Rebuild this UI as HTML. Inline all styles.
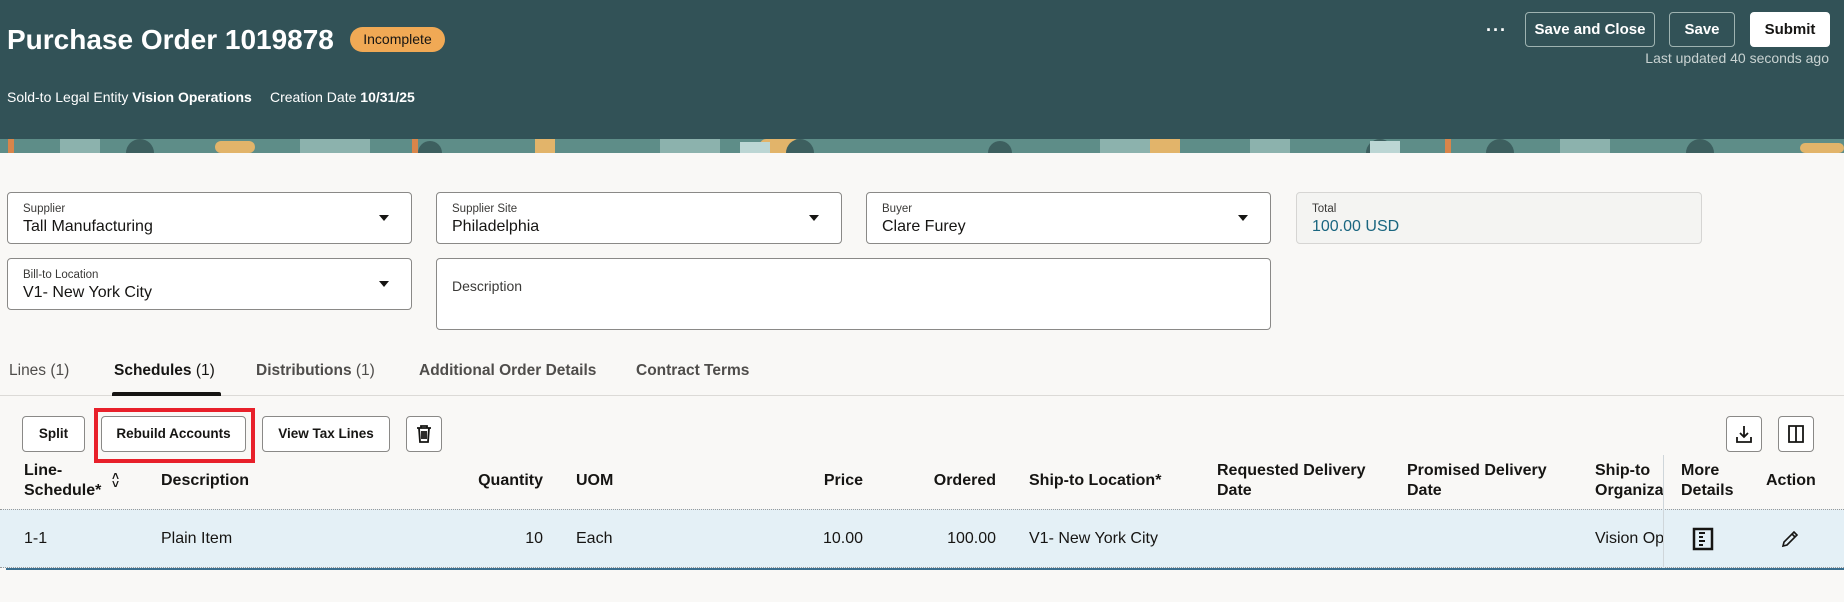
<!DOCTYPE html>
<html><head><meta charset="utf-8"><style>
*{box-sizing:border-box;margin:0;padding:0}
body{width:1844px;height:602px;overflow:hidden;background:#f9f8f6;font-family:"Liberation Sans",sans-serif;color:#161513;position:relative}
.abs{position:absolute}
.hdr{left:0;top:0;width:1844px;height:140px;background:#325257}
.band{left:0;top:139px;width:1844px;height:14px;background:#5e8d88;overflow:hidden}
.title{left:7px;top:24px;font-size:28px;font-weight:bold;color:#fff}
.pill{left:350px;top:27px;width:95px;height:25px;border-radius:13px;background:#f0a955;color:#161513;font-size:14px;text-align:center;line-height:25px}
.sub{top:89px;font-size:14px;color:#fff}
.hbtn{top:12px;height:35px;border:1px solid #9fb3b1;border-radius:4px;color:#fff;font-size:15px;font-weight:bold;text-align:center;line-height:33px}
.fld{border:1px solid #8a8987;border-radius:4px;background:#fff}
.lbl{font-size:11.5px;color:#3a3937;position:absolute;left:15px;top:10px}
.val{font-size:16px;position:absolute;left:15px;top:25px}
.caret{position:absolute;right:22px;top:22px;width:0;height:0;border-left:5px solid transparent;border-right:5px solid transparent;border-top:6px solid #161513}
.tab{top:362px;font-size:15.5px;color:#4f4d4b;font-weight:bold}
.tab span{font-weight:normal}
.tb{top:416px;height:36px;border:1px solid #8a8987;border-radius:4px;background:#fff;font-size:13.5px;font-weight:bold;text-align:center;line-height:34px}
.th{font-size:16px;font-weight:bold;line-height:20px}
.td{font-size:16px;top:530px}
</style></head><body>
<div class="abs hdr"></div>
<div class="abs band">
<svg width="1844" height="14">
<g fill="#8cb2ad"><rect x="60" y="0" width="40" height="14"/><rect x="300" y="0" width="70" height="14"/><rect x="660" y="0" width="60" height="14"/><rect x="1100" y="0" width="60" height="14"/><rect x="1560" y="0" width="50" height="14"/><rect x="1250" y="0" width="40" height="14"/></g>
<g fill="#e2b46a"><rect x="215" y="2" width="40" height="12" rx="6"/><rect x="535" y="0" width="20" height="14"/><rect x="760" y="0" width="40" height="14" rx="6"/><rect x="1150" y="0" width="30" height="14"/><rect x="1800" y="4" width="44" height="10" rx="5"/></g>
<g fill="#d9854a"><rect x="8" y="0" width="6" height="14"/><rect x="412" y="0" width="6" height="14"/><rect x="1445" y="0" width="6" height="14"/></g>
<g fill="#3d5f5f"><circle cx="140" cy="14" r="14"/><circle cx="430" cy="14" r="12"/><circle cx="800" cy="14" r="14"/><circle cx="1000" cy="14" r="12"/><circle cx="1380" cy="14" r="14"/><circle cx="1700" cy="14" r="14"/><circle cx="1500" cy="14" r="14"/></g>
<g fill="#bcd6d4"><rect x="740" y="3" width="30" height="11"/><rect x="1370" y="2" width="30" height="12"/></g>
</svg></div>
<div class="abs title">Purchase Order 1019878</div>
<div class="abs pill">Incomplete</div>
<div class="abs sub" style="left:7px">Sold-to Legal Entity <b>Vision Operations</b></div>
<div class="abs sub" style="left:270px">Creation Date <b>10/31/25</b></div>
<div class="abs" style="left:1486px;top:20px;color:#fff;font-size:18px;font-weight:bold;letter-spacing:1px">···</div>
<div class="abs hbtn" style="left:1525px;width:130px">Save and Close</div>
<div class="abs hbtn" style="left:1669px;width:66px">Save</div>
<div class="abs hbtn" style="left:1750px;width:80px;background:#fff;color:#161513;border-color:#fff">Submit</div>
<div class="abs" style="right:15px;top:50px;font-size:14px;color:#c9d3d2">Last updated 40 seconds ago</div>

<div class="abs fld" style="left:7px;top:192px;width:405px;height:52px"><div class="lbl">Supplier</div><div class="val">Tall Manufacturing</div><div class="caret"></div></div>
<div class="abs fld" style="left:436px;top:192px;width:406px;height:52px"><div class="lbl">Supplier Site</div><div class="val">Philadelphia</div><div class="caret"></div></div>
<div class="abs fld" style="left:866px;top:192px;width:405px;height:52px"><div class="lbl">Buyer</div><div class="val">Clare Furey</div><div class="caret"></div></div>
<div class="abs fld" style="left:1296px;top:192px;width:406px;height:52px;background:#f4f4f2;border-color:#d6d5d3"><div class="lbl">Total</div><div class="val" style="color:#1a6680">100.00 USD</div></div>
<div class="abs fld" style="left:7px;top:258px;width:405px;height:52px"><div class="lbl">Bill-to Location</div><div class="val">V1- New York City</div><div class="caret"></div></div>
<div class="abs fld" style="left:436px;top:258px;width:835px;height:72px"><div class="lbl" style="font-size:14px;top:19px">Description</div></div>

<div class="abs tab" style="left:9px;font-weight:normal">Lines <span>(1)</span></div>
<div class="abs tab" style="left:114px;color:#161513">Schedules <span>(1)</span></div>
<div class="abs tab" style="left:256px">Distributions <span>(1)</span></div>
<div class="abs tab" style="left:419px">Additional Order Details</div>
<div class="abs tab" style="left:636px">Contract Terms</div>
<div class="abs" style="left:0;top:395px;width:1844px;height:1px;background:#dcdad7"></div>
<div class="abs" style="left:112px;top:392px;width:109px;height:4px;background:#161513;border-radius:2px 2px 0 0"></div>

<div class="abs tb" style="left:22px;width:63px">Split</div>
<div class="abs" style="left:94px;top:408px;width:161px;height:55px;border:4px solid #e8202a"></div>
<div class="abs tb" style="left:101px;width:145px">Rebuild Accounts</div>
<div class="abs tb" style="left:262px;width:128px">View Tax Lines</div>
<div class="abs tb" style="left:406px;width:36px"><svg width="18" height="20" viewBox="0 0 18 20" style="margin-top:7px"><path d="M2 4h14M6 4V2h6v2M4 4l1 14h8l1-14M7 7v8M9 7v8M11 7v8" stroke="#161513" stroke-width="1.8" fill="none"/></svg></div>
<div class="abs tb" style="left:1726px;width:36px"><svg width="18" height="20" viewBox="0 0 18 20" style="margin-top:7px"><path d="M9 2v11M5 9l4 4 4-4M2 13v5h14v-5" stroke="#161513" stroke-width="1.8" fill="none"/></svg></div>
<div class="abs tb" style="left:1778px;width:36px"><svg width="18" height="20" viewBox="0 0 18 20" style="margin-top:7px"><path d="M2 2h14v16H2zM9 2v16" stroke="#161513" stroke-width="1.8" fill="none"/></svg></div>

<div class="abs th" style="left:24px;top:461px">Line-<br>Schedule*</div>
<div class="abs" style="left:112px;top:472px;font-size:12px;line-height:8px;font-weight:bold">˄<br>˅</div>
<div class="abs th" style="left:161px;top:471px">Description</div>
<div class="abs th" style="left:443px;width:100px;text-align:right;top:471px">Quantity</div>
<div class="abs th" style="left:576px;top:471px">UOM</div>
<div class="abs th" style="left:763px;width:100px;text-align:right;top:471px">Price</div>
<div class="abs th" style="left:896px;width:100px;text-align:right;top:471px">Ordered</div>
<div class="abs th" style="left:1029px;top:471px">Ship-to Location*</div>
<div class="abs th" style="left:1217px;top:461px">Requested Delivery<br>Date</div>
<div class="abs th" style="left:1407px;top:461px">Promised Delivery<br>Date</div>
<div class="abs th" style="left:1595px;top:461px;width:68px;overflow:hidden;white-space:nowrap">Ship-to<br>Organization</div>
<div class="abs th" style="left:1681px;top:461px">More<br>Details</div>
<div class="abs th" style="left:1766px;top:471px">Action</div>

<div class="abs" style="left:0;top:509px;width:1844px;height:59px;background:#e4f0f6;border-top:1px dotted #9a9a9a;border-bottom:1px dotted #9a9a9a"></div>
<div class="abs" style="left:6px;top:568px;width:1838px;height:2px;background:#3a6f8f"></div>
<div class="abs" style="left:1663px;top:455px;width:1px;height:113px;background:#cfd6da"></div>
<div class="abs td" style="left:24px">1-1</div>
<div class="abs td" style="left:161px">Plain Item</div>
<div class="abs td" style="left:443px;width:100px;text-align:right">10</div>
<div class="abs td" style="left:576px">Each</div>
<div class="abs td" style="left:763px;width:100px;text-align:right">10.00</div>
<div class="abs td" style="left:896px;width:100px;text-align:right">100.00</div>
<div class="abs td" style="left:1029px">V1- New York City</div>
<div class="abs td" style="left:1595px;width:68px;overflow:hidden;white-space:nowrap">Vision Operations</div>
<svg class="abs" style="left:1692px;top:527px" width="22" height="24" viewBox="0 0 22 24"><path d="M2 2h18v20H2z" stroke="#161513" stroke-width="2.5" fill="none"/><path d="M7 6h6M7 10h4M7 14h6M7 18h4" stroke="#161513" stroke-width="2"/></svg>
<svg class="abs" style="left:1780px;top:529px" width="20" height="20" viewBox="0 0 20 20"><path d="M3 17l1-4 10-10 3 3-10 10z M12 5l3 3" stroke="#161513" stroke-width="1.6" fill="none"/></svg>
</body></html>
